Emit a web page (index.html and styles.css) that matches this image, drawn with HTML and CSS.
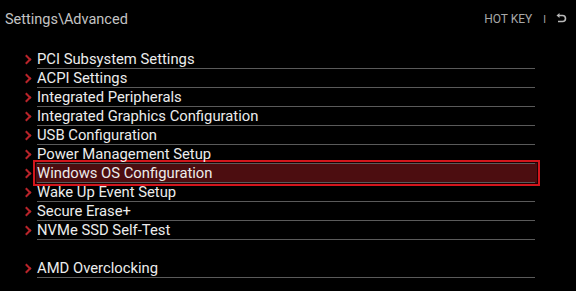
FILE: index.html
```html
<!DOCTYPE html>
<html lang="en">
<head>
    <meta charset="UTF-8">
    <link rel="stylesheet" href="styles.css">
    <title>Settings\Advanced</title>
</head>
<body>
<div class="header">
    <div class="path">Settings\Advanced</div>
    <div class="hotkey">
        <span>HOT KEY</span>
        <span class="sep">I</span>
        <svg class="back" width="12" height="12" viewBox="0 0 12 12">
            <path d="M4 2.5 H7.5 a3 3 0 0 1 0 6 H3" fill="none" stroke="#b8b8b8" stroke-width="1.6"/>
            <path d="M1.5 2.5 L4.5 0 L4.5 5 Z" fill="#b8b8b8"/>
        </svg>
    </div>
</div>
<div class="menu">
    <div class="item"><span class="arrow"></span><span class="label">PCI Subsystem Settings</span></div>
    <div class="item"><span class="arrow"></span><span class="label">ACPI Settings</span></div>
    <div class="item"><span class="arrow"></span><span class="label">Integrated Peripherals</span></div>
    <div class="item"><span class="arrow"></span><span class="label">Integrated Graphics Configuration</span></div>
    <div class="item"><span class="arrow"></span><span class="label">USB Configuration</span></div>
    <div class="item"><span class="arrow"></span><span class="label">Power Management Setup</span></div>
    <div class="item selected"><span class="arrow"></span><span class="label">Windows OS Configuration</span></div>
    <div class="item"><span class="arrow"></span><span class="label">Wake Up Event Setup</span></div>
    <div class="item"><span class="arrow"></span><span class="label">Secure Erase+</span></div>
    <div class="item"><span class="arrow"></span><span class="label">NVMe SSD Self-Test</span></div>
    <div class="spacer"></div>
    <div class="item"><span class="arrow"></span><span class="label">AMD Overclocking</span></div>
</div>
</body>
</html>
```

FILE: styles.css
```css
body {
    margin: 0;
    background-color: #000;
    font-family: Roboto, "Liberation Sans", sans-serif;
    color: #ececec;
}

.header {
    display: flex;
    justify-content: space-between;
    align-items: center;
    height: 38px;
    padding: 0 9px 0 5px;
}

.path {
    font-size: 14.5px;
    color: #c4c4c4;
}

.hotkey {
    display: flex;
    align-items: center;
    font-size: 12px;
    color: #a8a8a8;
}

.hotkey .sep {
    margin: 0 9px 0 11px;
    font-size: 10px;
}

.menu {
    padding-top: 12px;
    padding-left: 22px;
    width: 513px;
}

.item {
    position: relative;
    display: flex;
    height: 19px;
}

.arrow {
    width: 15px;
    flex-shrink: 0;
    position: relative;
}

.arrow::before {
    content: "";
    position: absolute;
    left: 1px;
    top: 6px;
    width: 5px;
    height: 5px;
    border-top: 2px solid #b8242a;
    border-right: 2px solid #b8242a;
    transform: rotate(45deg);
}

.label {
    flex: 1;
    font-size: 14.8px;
    line-height: 19px;
    border-bottom: 1px solid #5a5a5a;
    position: relative;
    z-index: 1;
}

.spacer {
    height: 19px;
}

.selected::before {
    content: "";
    position: absolute;
    left: 11px;
    right: -5px;
    top: -4px;
    bottom: -3px;
    border: 2px solid #d3161d;
    background-color: #4c0d10;
    box-shadow: inset 0 0 0 1px #1a0304;
}
```
